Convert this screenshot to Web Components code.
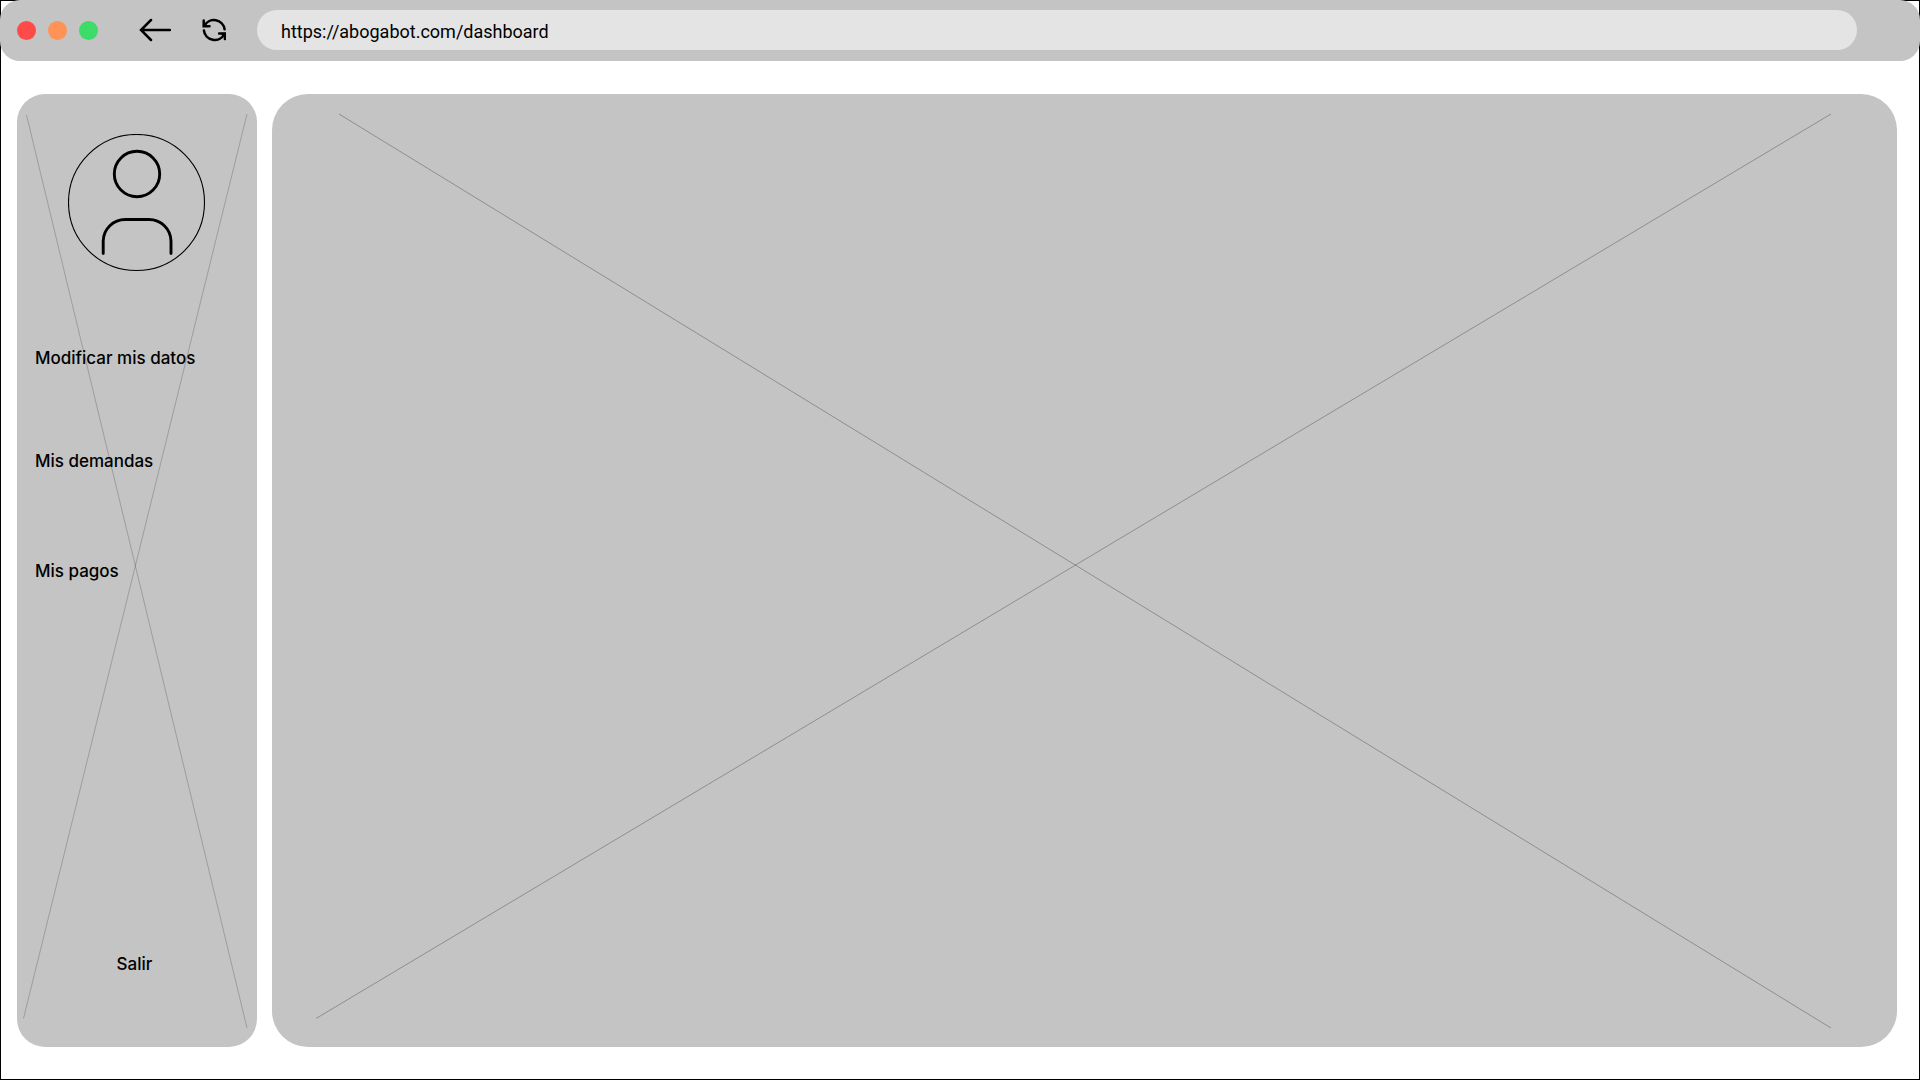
<!DOCTYPE html>
<html lang="es">
<head>
<meta charset="utf-8">
<title>Abogabot</title>
<style>
  body { margin: 0; font-family: Inter, "Liberation Sans", sans-serif; color: #000; }
</style>
</head>
<body>
<dashboard-window>
  <browser-bar slot="bar" url="https://abogabot.com/dashboard"></browser-bar>
  <side-panel>
    <user-avatar slot="avatar"></user-avatar>
    <menu-link href="#datos">Modificar mis datos</menu-link>
    <menu-link href="#demandas">Mis demandas</menu-link>
    <menu-link href="#pagos" apart>Mis pagos</menu-link>
    <menu-link slot="exit" href="#salir">Salir</menu-link>
  </side-panel>
  <content-panel></content-panel>
</dashboard-window>

<script>
const define = (name, html, setup) => customElements.define(name, class extends HTMLElement {
  constructor() {
    super();
    this.attachShadow({ mode: "open" }).innerHTML = html;
  }
  connectedCallback() { if (setup) setup(this, this.shadowRoot); }
});

define("dashboard-window", `
  <style>
    :host { display: flex; flex-direction: column; min-height: 100vh; box-sizing: border-box;
            background: #fff; box-shadow: inset 0 0 0 1px #000; }
    main { flex: 1; display: flex; gap: 15px; padding: 33px 23px 33px 17px; }
  </style>
  <slot name="bar"></slot>
  <main><slot></slot></main>`);

define("browser-bar", `
  <style>
    :host { display: flex; align-items: center; height: 61px; padding: 0 63px 0 17px;
            box-sizing: border-box; background: #c4c4c4; border-radius: 20px; }
    .dots { display: flex; gap: 12px; }
    .dots i { width: 19px; height: 19px; border-radius: 50%; }
    .red { background: #ff4a4a; } .orange { background: #ff9255; } .green { background: #3ddb68; }
    nav { display: flex; align-items: center; gap: 31px; margin: 0 31px 1px 41px; }
    button { display: block; padding: 0; border: 0; background: none; color: inherit; }
    svg { display: block; fill: none; stroke: currentColor; stroke-width: 2.5; stroke-linecap: round; }
    svg .tip { fill: currentColor; stroke-width: 1.5; stroke-linejoin: round; }
    input { flex: 1; min-width: 0; height: 40px; box-sizing: border-box; margin: 0 0 1px; padding: 2px 24px 0;
            border: 0; border-radius: 20px; background: #e4e4e4; color: #000; outline: 0;
            font: 18px Roboto, "Liberation Sans", sans-serif; }
  </style>
  <div class="dots"><i class="red"></i><i class="orange"></i><i class="green"></i></div>
  <nav>
    <button type="button" aria-label="Atrás">
      <svg width="32" height="24" viewBox="0 0 32 24"><path d="M31 12H2M12 2 2 12l10 10"/></svg>
    </button>
    <button type="button" aria-label="Recargar">
      <svg width="24" height="24" viewBox="0 0 24 24">
        <path d="M2.500 7.500A10.800 10.800 0 0 1 22.600 11.300M1.900 12.500A10.800 10.800 0 0 0 22.300 16"/>
        <path d="M1.700 2.500v5.800h5.800M22.900 21v-5.600h-5.800"/>
        <path class="tip" d="M1.700 5v3.300h3.500zM22.900 18.800v-3.400h-3.400z"/>
      </svg>
    </button>
  </nav>
  <input type="text" aria-label="Dirección" spellcheck="false">`,
  (host, root) => { root.querySelector("input").value = host.getAttribute("url"); });

define("side-panel", `
  <style>
    :host { position: relative; display: flex; flex-direction: column; flex: 0 0 240px;
            box-sizing: border-box; padding: 40px 18px 72px; background: #c4c4c4; border-radius: 28px; }
    .cross { position: absolute; inset: 0; width: 100%; height: 100%; stroke: #000; stroke-opacity: .2; }
    nav { position: relative; display: flex; flex-direction: column; gap: 81px; margin-top: 75px; }
    ::slotted([apart]) { margin-top: 7px; }
    footer { position: relative; margin-top: auto; padding-right: 5px; text-align: center; }
  </style>
  <svg class="cross" viewBox="0 0 240 953" preserveAspectRatio="none" aria-hidden="true">
    <path d="M9.500 21 230 934M230 20 6.500 924.500" vector-effect="non-scaling-stroke"/>
  </svg>
  <slot name="avatar"></slot>
  <nav><slot></slot></nav>
  <footer><slot name="exit"></slot></footer>`);

define("user-avatar", `
  <style>
    :host { position: relative; display: block; align-self: center; }
    svg { display: block; fill: none; stroke: #000; stroke-width: 2.900; stroke-linecap: round; }
  </style>
  <svg width="138" height="138" viewBox="0 0 138 138" role="img" aria-label="Usuario">
    <circle cx="68.500" cy="68.500" r="68" stroke-width="1.100"/>
    <circle cx="69" cy="40" r="22.700"/>
    <path d="M35.200 119.500V107a22 22 0 0 1 22-21.500H81a22 22 0 0 1 22 21.500v12.500"/>
  </svg>`);

define("menu-link", `
  <style>
    :host { display: block; }
    a { color: inherit; text-decoration: none; font-size: 17px; font-weight: 500; line-height: 22px; }
  </style>
  <a><slot></slot></a>`,
  (host, root) => { root.querySelector("a").href = host.getAttribute("href"); });

define("content-panel", `
  <style>
    :host { position: relative; display: block; flex: 1; background: #c4c4c4; border-radius: 36px; }
    svg { position: absolute; inset: 0; width: 100%; height: 100%; stroke: #000; stroke-opacity: .28; }
  </style>
  <svg viewBox="0 0 1625 953" preserveAspectRatio="none" aria-hidden="true">
    <path d="M67 20 1559 934M1559 20 44 924.500" vector-effect="non-scaling-stroke"/>
  </svg>`);
</script>
</body>
</html>
